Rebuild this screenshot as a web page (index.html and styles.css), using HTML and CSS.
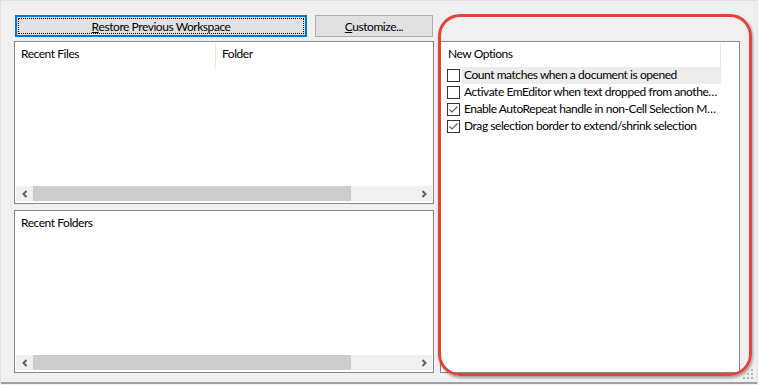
FILE: index.html
```html
<!DOCTYPE html>
<html lang="en">
<head>
  <meta charset="UTF-8" />
  <meta name="viewport" content="width=device-width, initial-scale=1.0" />
  <title>Workspace</title>
  <link rel="stylesheet" href="styles.css">
</head>
<body>
  <div class="dialog">
    <div class="left">
      <div class="buttons">
        <button class="btn btn-focus"><span class="focus-ring"><u>R</u>estore Previous Workspace</span></button>
        <button class="btn btn-small"><u>C</u>ustomize...</button>
      </div>

      <div class="list">
        <div class="list-header">
          <div class="col col-name">Recent Files</div>
          <div class="col">Folder</div>
        </div>
        <div class="list-body"></div>
        <div class="hscroll">
          <span class="arrow"><svg width="8" height="8" viewBox="0 0 8 8"><path d="M5.5 1 L2.5 4 L5.5 7" fill="none" stroke="#606060" stroke-width="2"/></svg></span>
          <span class="track"><span class="thumb"></span></span>
          <span class="arrow"><svg width="8" height="8" viewBox="0 0 8 8"><path d="M2.5 1 L5.5 4 L2.5 7" fill="none" stroke="#606060" stroke-width="2"/></svg></span>
        </div>
      </div>

      <div class="list">
        <div class="list-header">
          <div class="col">Recent Folders</div>
        </div>
        <div class="list-body"></div>
        <div class="hscroll">
          <span class="arrow"><svg width="8" height="8" viewBox="0 0 8 8"><path d="M5.5 1 L2.5 4 L5.5 7" fill="none" stroke="#606060" stroke-width="2"/></svg></span>
          <span class="track"><span class="thumb"></span></span>
          <span class="arrow"><svg width="8" height="8" viewBox="0 0 8 8"><path d="M2.5 1 L5.5 4 L2.5 7" fill="none" stroke="#606060" stroke-width="2"/></svg></span>
        </div>
      </div>
    </div>

    <div class="right">
      <div class="options">
        <div class="options-header">
          <div class="col col-opt">New Options</div>
        </div>
        <label class="opt opt-hover">
          <span class="box"></span>
          <span class="opt-text">Count matches when a document is opened</span>
        </label>
        <label class="opt">
          <span class="box"></span>
          <span class="opt-text">Activate EmEditor when text dropped from anothe…</span>
        </label>
        <label class="opt">
          <span class="box"><svg width="11" height="11" viewBox="0 0 11 11"><path d="M1.5 5.5 L4 8 L9.5 2.5" fill="none" stroke="#5a5a5a" stroke-width="1.1"/></svg></span>
          <span class="opt-text">Enable AutoRepeat handle in non-Cell Selection M…</span>
        </label>
        <label class="opt">
          <span class="box"><svg width="11" height="11" viewBox="0 0 11 11"><path d="M1.5 5.5 L4 8 L9.5 2.5" fill="none" stroke="#5a5a5a" stroke-width="1.1"/></svg></span>
          <span class="opt-text">Drag selection border to extend/shrink selection</span>
        </label>
      </div>
    </div>

    <div class="grip">
      <svg width="12" height="12" viewBox="0 0 12 12" fill="#b4b4b4">
        <rect x="9" y="1" width="2" height="2"/>
        <rect x="5" y="5" width="2" height="2"/><rect x="9" y="5" width="2" height="2"/>
        <rect x="1" y="9" width="2" height="2"/><rect x="5" y="9" width="2" height="2"/><rect x="9" y="9" width="2" height="2"/>
      </svg>
    </div>

    <div class="annot"></div>
  </div>
</body>
</html>
```

FILE: styles.css
```css
body {
  margin: 0;
  background: #f0f0f0;
  font-family: Lato, 'Segoe UI', sans-serif;
  font-size: 12px;
  letter-spacing: -0.45px;
  color: #000;
}
.dialog {
  position: relative;
  width: 758px;
  height: 385px;
  box-sizing: border-box;
  padding: 14px 0 0 13px;
  border-top: 1px solid #e2e2e2;
  border-left: 1px solid #e2e2e2;
  border-right: 1px solid #e2e2e2;
  display: flex;
  gap: 6px;
  background: #f0f0f0;
}
.dialog::after {
  content: "";
  position: absolute;
  left: 0;
  right: 0;
  top: 381px;
  height: 2px;
  background: #a0a0a0;
}
.left {
  width: 420px;
  display: flex;
  flex-direction: column;
  gap: 6px;
}
.buttons {
  display: flex;
  gap: 8px;
  margin-left: 1px;
  margin-bottom: -2px;
}
.btn {
  height: 22px;
  box-sizing: border-box;
  background: #e1e1e1;
  border: 1px solid #adadad;
  font-family: inherit;
  font-size: 12px;
  letter-spacing: inherit;
  color: #000;
  padding: 0;
}
.btn-focus {
  width: 292px;
  border: 2px solid #0078d7;
  padding: 1px;
  display: flex;
}
.focus-ring {
  flex: 1;
  border: 1px dotted #000;
  display: flex;
  align-items: center;
  justify-content: center;
}
.btn-small {
  width: 118px;
}
.list {
  height: 163px;
  box-sizing: border-box;
  border: 1px solid #828790;
  background: #fff;
  display: flex;
  flex-direction: column;
}
.list-header {
  display: flex;
  height: 26px;
  padding-top: 1px;
}
.col {
  padding: 4px 6px 6px;
  line-height: 14px;
}
.col-name {
  width: 188px;
  border-right: 1px solid #e5e5e5;
  margin-bottom: 1px;
}
.list-body {
  flex: 1;
}
.hscroll {
  height: 15px;
  margin: 0 1px 2px 1px;
  background: #f0f0f0;
  display: flex;
}
.arrow {
  width: 17px;
  display: flex;
  align-items: center;
  justify-content: center;
}
.track {
  flex: 1;
}
.thumb {
  display: block;
  width: 318px;
  height: 15px;
  background: #cdcdcd;
}
.right {
  width: 300px;
  padding-top: 26px;
}
.options {
  height: 332px;
  box-sizing: border-box;
  border: 1px solid #828790;
  background: #fff;
}
.options-header {
  height: 24px;
  padding-top: 1px;
}
.col-opt {
  width: 266px;
  border-right: 1px solid #e5e5e5;
  padding-left: 7px;
  margin-bottom: 1px;
}
.opt {
  display: flex;
  align-items: center;
  height: 17px;
  padding-left: 6px;
}
.box {
  width: 11px;
  height: 11px;
  border: 1px solid #333;
  background: #fff;
  display: flex;
}
.opt-text {
  margin-left: 2px;
  padding-left: 2px;
  width: 257px;
  line-height: 16px;
  padding-bottom: 1px;
  white-space: nowrap;
  overflow: hidden;
}
.opt-hover .opt-text {
  background: #ececec;
}
.grip {
  position: absolute;
  left: 741px;
  top: 367px;
  width: 12px;
  height: 12px;
}
.annot {
  position: absolute;
  left: 437px;
  top: 13px;
  width: 308px;
  height: 356px;
  border: 3px solid #e5423a;
  border-radius: 22px;
  box-shadow: 1px 2px 3px rgba(0, 0, 0, 0.35);
}
```
